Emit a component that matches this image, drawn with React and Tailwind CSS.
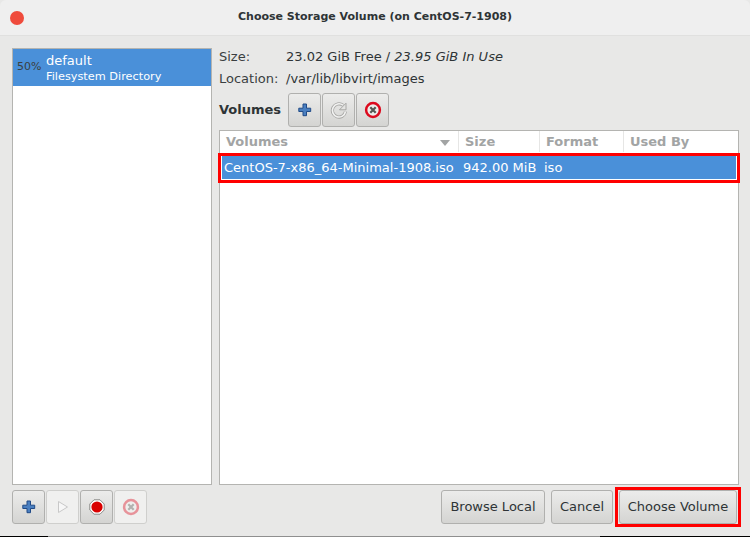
import React from "react";

const Plus = () => (
  <svg width="16" height="16" viewBox="0 0 16 16">
    <path d="M6 2h3.500v4.200h4.200v3.300H9.500v4.200H6V9.500H1.800V6.200H6z" fill="#4a7fc0" stroke="#204a87" strokeWidth="1" strokeLinejoin="round" />
  </svg>
);

const Stop = ({ faded }) => (
  <svg width="18" height="18" viewBox="0 0 18 18" className={faded ? "opacity-40" : ""}>
    <circle cx="9" cy="9" r="6.900" fill="#eeeeec" stroke="#dc0a1e" strokeWidth="2.500" />
    <path d="M6.300 6.300l5.400 5.400M11.700 6.300l-5.400 5.400" stroke="#555753" strokeWidth="2.200" />
  </svg>
);

const Refresh = () => (
  <svg width="18" height="18" viewBox="0 0 18 18" fill="none">
    <path d="M13 4.200A6.600 6.600 0 1 0 15.500 10.500" stroke="#a6a6a4" strokeWidth="3.200" />
    <path d="M13 4.200A6.600 6.600 0 1 0 15.500 10.500" stroke="#f2f2f1" strokeWidth="1.600" />
    <path d="M9.500 8.800h6.500V2.200z" fill="#e4e4e2" stroke="#a0a09e" strokeWidth="0.900" />
  </svg>
);

const Play = () => (
  <svg width="14" height="16" viewBox="0 0 14 16">
    <path d="M2.500 2.500l9 5.500-9 5.500z" fill="#f7f7f7" stroke="#c8c8c8" />
  </svg>
);

const Record = () => (
  <svg width="18" height="18" viewBox="0 0 18 18">
    <path d="M6 1.800h6L16.200 6v6L12 16.200H6L1.800 12V6z" fill="#fff" stroke="#8a8a88" />
    <circle cx="9" cy="9" r="5.600" fill="#d90000" />
  </svg>
);

function IconButton({ children, disabled }) {
  return (
    <button
      className={`w-[33px] h-[34px] flex items-center justify-center rounded-[3px] border ${
        disabled
          ? "bg-[#f0f0ef] border-[#cfcfcd]"
          : "bg-gradient-to-b from-[#ececeb] to-[#d4d4d2] border-[#b0b0ae]"
      }`}
    >
      {children}
    </button>
  );
}

function TextButton({ label, className }) {
  return (
    <button
      className={`h-[34px] rounded-[3px] border border-[#b0b0ae] bg-gradient-to-b from-[#ececeb] to-[#d4d4d2] text-[#2e3436] text-[13px] ${className}`}
    >
      {label}
    </button>
  );
}

const headers = [
  { label: "Volumes", w: "w-[239px]", sort: true },
  { label: "Size", w: "w-[81px]" },
  { label: "Format", w: "w-[84px]" },
  { label: "Used By", w: "flex-1" },
];

export default function App() {
  return (
    <div
      className="w-[750px] h-[537px] flex flex-col bg-[#e8e8e7] text-[#2e3436] text-[13px] overflow-hidden"
      style={{ fontFamily: "'DejaVu Sans', sans-serif" }}
    >
      {/* Title bar */}
      <div className="relative h-[36px] shrink-0 flex items-center justify-center bg-[#efefef] rounded-t-[6px] border-b border-[#e0e0df]">
        <div className="absolute left-[10px] top-[11px] w-[14px] h-[14px] rounded-full bg-[#ef4b3c]" />
        <span className="font-bold text-[11px] text-[#2e3436]">Choose Storage Volume (on CentOS-7-1908)</span>
      </div>

      {/* Main */}
      <div className="flex-1 flex gap-[7px] pt-[12px] pl-[12px] pr-[11px] min-h-0">
        {/* Pools */}
        <div className="w-[200px] shrink-0 h-[437px] bg-white border border-[#b4b4b1]">
          <div className="h-[37px] bg-[#4a90d9] flex items-center text-white">
            <span className="w-[33px] pl-[4px] text-[11px] text-[#3a3f41]">50%</span>
            <div className="flex flex-col">
              <span className="leading-[17px] text-[13px]">default</span>
              <span className="leading-[15px] text-[11.3px]">Filesystem Directory</span>
            </div>
          </div>
        </div>

        {/* Volumes */}
        <div className="flex-1 flex flex-col min-w-0">
          <div className="flex h-[17px] items-center">
            <span className="w-[67px] text-[#3a3f41]">Size:</span>
            <span>
              23.02 GiB Free / <em>23.95 GiB In Use</em>
            </span>
          </div>
          <div className="flex h-[17px] mt-[5px] items-center">
            <span className="w-[67px] text-[#3a3f41]">Location:</span>
            <span>/var/lib/libvirt/images</span>
          </div>
          <div className="flex items-center mt-[5px] h-[35px]">
            <span className="font-bold w-[69px]">Volumes</span>
            <div className="flex gap-[1px]">
              <IconButton><Plus /></IconButton>
              <IconButton><Refresh /></IconButton>
              <IconButton><Stop /></IconButton>
            </div>
          </div>
          <div className="mt-[3px] h-[355px] w-[520px] bg-white border border-[#b4b4b1]">
            <div className="flex h-[22px] border-b border-white">
              {headers.map((h) => (
                <div
                  key={h.label}
                  className={`${h.w} relative flex items-center pl-[6px] font-bold text-[#a2a4a4] border-r border-[#e6e6e5] last:border-r-0`}
                >
                  {h.label}
                  {h.sort && (
                    <span className="absolute right-[8px] top-[9px] w-0 h-0 border-l-[5px] border-r-[5px] border-t-[6px] border-l-transparent border-r-transparent border-t-[#a2a4a4]" />
                  )}
                </div>
              ))}
            </div>
            <div className="mx-[-2px] h-[30px] border-[3px] border-[#ff0000] pl-[1px] pr-[1px] bg-white">
              <div className="h-[23px] flex items-center bg-[#4a90d9] text-white pl-[2px] whitespace-nowrap">
                <span className="w-[239px]">CentOS-7-x86_64-Minimal-1908.iso</span>
                <span className="w-[81px]">942.00 MiB</span>
                <span>iso</span>
              </div>
            </div>
          </div>
        </div>
      </div>

      {/* Bottom buttons */}
      <div className="h-[51px] shrink-0 flex items-start pt-[5px] pl-[12px] pr-[9px]">
        <div className="flex gap-[1px]">
          <IconButton><Plus /></IconButton>
          <IconButton disabled><Play /></IconButton>
          <IconButton><Record /></IconButton>
          <IconButton disabled><Stop faded /></IconButton>
        </div>
        <div className="ml-auto flex items-start">
          <TextButton label="Browse Local" className="w-[104px]" />
          <TextButton label="Cancel" className="w-[62px] ml-[6px]" />
          <div className="ml-[2px] mt-[-3px] border-[3px] border-[#ff0000] px-[1px] h-[40px] w-[126px]">
            <TextButton label="Choose Volume" className="w-full" />
          </div>
        </div>
      </div>

      {/* Screen edge below the window */}
      <div className="h-[1px] shrink-0 flex">
        <div className="w-[48px] bg-black" />
        <div className="w-[552px] bg-[#8f8f8f]" />
        <div className="flex-1 bg-black" />
      </div>
    </div>
  );
}
